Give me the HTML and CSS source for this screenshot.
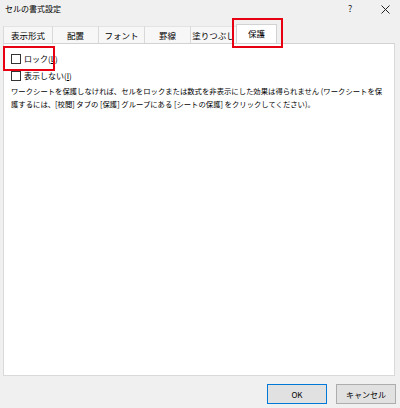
FILE: index.html
```html
<!DOCTYPE html>
<html lang="ja">
<head>
<meta charset="utf-8">
<title>セルの書式設定</title>
<link rel="stylesheet" href="styles.css">
</head>
<body>
<div class="dialog">
  <div class="titlebar">
    <span class="title">セルの書式設定</span>
    <span class="help">?</span>
    <span class="close"><svg width="9" height="9" viewBox="0 0 9 9"><path d="M0.5 0.5 L8.5 8.5 M8.5 0.5 L0.5 8.5" stroke="#222" stroke-width="1" fill="none"/></svg></span>
  </div>
  <div class="tabs">
    <div class="tab first">表示形式</div>
    <div class="tab">配置</div>
    <div class="tab">フォント</div>
    <div class="tab">罫線</div>
    <div class="tab">塗りつぶし</div>
    <div class="tab active">保護</div>
  </div>
  <div class="panel">
    <label class="check"><span class="box"></span>ロック(<u>L</u>)</label>
    <label class="check"><span class="box"></span>表示しない(<u>I</u>)</label>
    <p class="note">ワークシートを保護しなければ、セルをロックまたは数式を非表示にした効果は得られません (ワークシートを保<br>護するには、[校閲] タブの [保護] グループにある [シートの保護] をクリックしてください)。</p>
  </div>
  <div class="footer">
    <button class="btn primary">OK</button>
    <button class="btn">キャンセル</button>
  </div>
  <div class="mark mark-lock"></div>
  <div class="mark mark-tab"></div>
</div>
</body>
</html>
```
FILE: styles.css
```css
html, body {
  margin: 0;
  padding: 0;
}
body {
  background: #f0f0f0;
  font-family: "Noto Sans CJK JP", "Noto Sans", sans-serif;
  color: #000;
}
.dialog {
  position: relative;
  width: 400px;
  height: 408px;
  overflow: hidden;
}
.titlebar {
  height: 24px;
  display: flex;
  align-items: center;
  padding: 0 0 6px 5px;
  box-sizing: border-box;
}
.title {
  font-size: 8px;
  line-height: 12px;
  flex: 1;
}
.help {
  font-size: 9px;
  line-height: 12px;
  width: 6px;
  margin-right: 27px;
  color: #222;
}
.close {
  display: flex;
  width: 9px;
  margin-right: 10px;
}
.tabs {
  display: flex;
  align-items: flex-end;
  height: 19px;
  margin-left: 3px;
}
.tab {
  width: 46px;
  height: 17px;
  box-sizing: border-box;
  border-top: 1px solid #e3e3e3;
  border-left: 1px solid #d9d9d9;
  background: #f7f7f7;
  font-size: 8.5px;
  line-height: 16px;
  text-align: center;
}
.tab.first {
  width: 49px;
}
.tab.active {
  width: 41px;
  height: 19px;
  background: #fff;
  border: 1px solid #d2d2d2;
  border-bottom: none;
  line-height: 17px;
}
.panel {
  margin-left: 3px;
  width: 392px;
  height: 333px;
  box-sizing: border-box;
  background: #fff;
  border: 1px solid #d9d9d9;
  border-top-color: #d2d2d2;
  padding: 6px 7px 0 7px;
}
.check {
  display: flex;
  align-items: center;
  height: 17px;
  font-size: 8px;
}
.check u {
  text-decoration: underline;
}
.box {
  width: 10px;
  height: 10px;
  box-sizing: border-box;
  border: 1px solid #333;
  margin-right: 3px;
  background: #fff;
}
.note {
  margin: 0;
  font-size: 7.35px;
  line-height: 13px;
  white-space: nowrap;
}
.footer {
  display: flex;
  justify-content: flex-end;
  gap: 9px;
  padding: 8px 4px 0 0;
}
.btn {
  width: 60px;
  height: 20px;
  box-sizing: border-box;
  border: 1px solid #adadad;
  background: #e1e1e1;
  font-family: "Noto Sans CJK JP", "Noto Sans", sans-serif;
  font-size: 8px;
  padding: 0;
  color: #000;
}
.btn.primary {
  border-color: #0078d7;
}
.mark {
  position: absolute;
  border: 2px solid #e60012;
  box-sizing: border-box;
}
.mark-lock {
  left: 3px;
  top: 46px;
  width: 52px;
  height: 25px;
}
.mark-tab {
  left: 232px;
  top: 18px;
  width: 51px;
  height: 30px;
}
```
